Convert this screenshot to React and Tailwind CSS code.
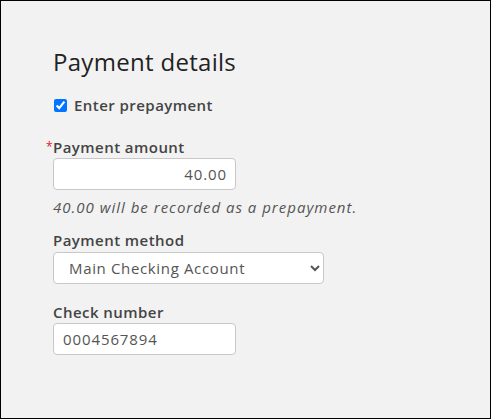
import React, { useState } from 'react';

function PaymentDetails() {
  const [form, setForm] = useState({
    prepay: true,
    amount: '40.00',
    method: 'main',
    checkNumber: '0004567894'
  });

  const handleChange = (e) => {
    const { name, value, type, checked } = e.target;
    setForm(prev => ({ ...prev, [name]: type === 'checkbox' ? checked : value }));
  };

  return (
    <div className="pl-[52px] pt-[47px]">
      <h2 className="text-[24px] leading-[28px] text-[#222] tracking-[0.3px]">Payment details</h2>

      {/* Prepayment toggle */}
      <label className="flex items-center gap-[7px] mt-[20px] text-[15px] leading-[18px] font-semibold text-[#444] tracking-[0.45px]">
        <input
          type="checkbox"
          name="prepay"
          checked={form.prepay}
          onChange={handleChange}
          className="w-[13px] h-[13px] m-0 ml-[1px] accent-[#0075ff]"
        />
        Enter prepayment
      </label>

      {/* Amount */}
      <div className="mt-[24px] relative">
        <span className="absolute -left-[7px] top-[0px] text-[#e02020] text-[12px] leading-[18px]">*</span>
        <div className="text-[15px] leading-[18px] font-semibold text-[#444] tracking-[0.45px]">Payment amount</div>
        <input
          name="amount"
          value={form.amount}
          onChange={handleChange}
          className="mt-[2px] w-[183px] h-[32px] bg-white border border-[#c8c8c8] rounded-[4px] px-[8px] text-right text-[15px] tracking-[0.9px] text-[#555] outline-none"
        />
        <p className="mt-[8px] text-[15px] leading-[18px] italic text-[#555] tracking-[1px]">
          {form.amount} will be recorded as a prepayment.
        </p>
      </div>

      {/* Method */}
      <div className="mt-[15px]">
        <div className="text-[15px] leading-[18px] font-semibold text-[#444] tracking-[0.45px]">Payment method</div>
        <select
          name="method"
          value={form.method}
          onChange={handleChange}
          className="mt-[3px] w-[271px] h-[32px] bg-white border border-[#c8c8c8] rounded-[4px] pl-[11px] pr-[4px] text-[15px] tracking-[0.65px] text-[#555] outline-none"
        >
          <option value="main">Main Checking Account</option>
          <option value="savings">Savings Account</option>
        </select>
      </div>

      {/* Check number */}
      <div className="mt-[19px]">
        <div className="text-[15px] leading-[18px] font-semibold text-[#444] tracking-[0.45px]">Check number</div>
        <input
          name="checkNumber"
          value={form.checkNumber}
          onChange={handleChange}
          className="mt-[2px] w-[183px] h-[32px] bg-white border border-[#c8c8c8] rounded-[4px] px-[9px] text-[15px] tracking-[0.9px] text-[#555] outline-none"
        />
      </div>
    </div>
  );
}

export default function App() {
  return (
    <div
      className="w-[491px] h-[419px] bg-[#f2f2f2] border border-black"
      style={{ fontFamily: '"Open Sans", "Liberation Sans", sans-serif' }}
    >
      <PaymentDetails />
    </div>
  );
}
